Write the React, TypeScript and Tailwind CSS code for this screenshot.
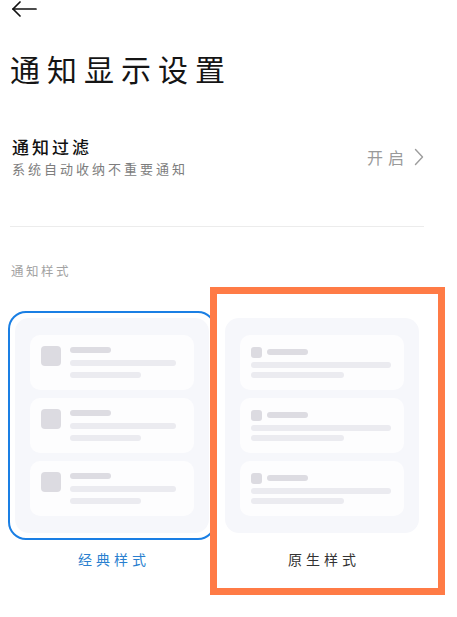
import React from "react";

function ClassicItem() {
  return (
    <div className="relative h-[55px] w-full rounded-[10px] bg-[#fdfdfe]">
      <div className="absolute left-[11px] top-[11px] h-[20px] w-[20px] rounded-[4px] bg-[#dcdbe1]" />
      <div className="absolute left-[40px] top-[12px] h-[6px] w-[41px] rounded-full bg-[#dddce2]" />
      <div className="absolute left-[40px] top-[25px] h-[6px] w-[106px] rounded-full bg-[#ebebf0]" />
      <div className="absolute left-[40px] top-[37px] h-[6px] w-[71px] rounded-full bg-[#ebebf0]" />
    </div>
  );
}

function NativeItem() {
  return (
    <div className="relative h-[55px] w-full rounded-[10px] bg-[#fdfdfe]">
      <div className="absolute left-[11px] top-[12px] h-[11px] w-[11px] rounded-[3px] bg-[#dcdbe1]" />
      <div className="absolute left-[27px] top-[14px] h-[6px] w-[41px] rounded-full bg-[#dddce2]" />
      <div className="absolute left-[11px] top-[27px] h-[6px] w-[140px] rounded-full bg-[#ebebf0]" />
      <div className="absolute left-[11px] top-[37px] h-[6px] w-[93px] rounded-full bg-[#ebebf0]" />
    </div>
  );
}

export default function App() {
  return (
    <div
      className="relative h-[617px] w-[457px] overflow-hidden bg-white text-[#111]"
      style={{ fontFamily: '"Noto Sans CJK SC", "Noto Sans", sans-serif' }}
    >
      {/* header */}
      <div className="h-[18px] pl-[11px] pt-[1px]">
        <svg width="26" height="16" viewBox="0 0 26 16" fill="none">
          <path d="M25 8 H2" stroke="#111" strokeWidth="1.7" strokeLinecap="round" />
          <path d="M9 1 L2 8 L9 15" stroke="#111" strokeWidth="1.7" strokeLinecap="round" strokeLinejoin="round" />
        </svg>
      </div>

      {/* title */}
      <div className="mt-[32px] pl-[10px] text-[30px] leading-[36px] tracking-[7px] text-[#151515]">
        通知显示设置
      </div>

      {/* filter row */}
      <div className="mt-[50px] flex items-center justify-between pl-[12px] pr-[33px]">
        <div className="flex flex-col">
          <div className="text-[17px] font-medium leading-[22px] tracking-[3px] text-[#111]">通知过滤</div>
          <div className="mt-[2px] text-[13px] leading-[18px] tracking-[3px] text-[#7d7d7d]">
            系统自动收纳不重要通知
          </div>
        </div>
        <div className="flex items-center gap-[5px] text-[#9a9a9a]">
          <span className="text-[16px] leading-[20px] tracking-[5px]">开启</span>
          <svg width="10" height="18" viewBox="0 0 10 18" fill="none">
            <path d="M1.5 1.5 L8.5 9 L1.5 16.5" stroke="#9d9d9d" strokeWidth="1.4" strokeLinecap="round" strokeLinejoin="round" />
          </svg>
        </div>
      </div>

      {/* divider */}
      <div className="ml-[10px] mr-[33px] mt-[48px] h-px bg-[#ececec]" />

      {/* section label */}
      <div className="mt-[36px] pl-[11px] text-[12.5px] leading-[16px] tracking-[2.5px] text-[#a3a3a3]">
        通知样式
      </div>

      {/* cards */}
      <div className="mt-[32px] flex gap-[2px] pl-[8px]">
        <div className="flex w-[208px] flex-col items-center">
          <div className="w-full rounded-[18px] border-[2.5px] border-[#1a7fe4] p-[5px]">
            <div className="flex flex-col gap-[8px] rounded-[14px] bg-[#f6f7fb] px-[15px] py-[17px]">
              <ClassicItem />
              <ClassicItem />
              <ClassicItem />
            </div>
          </div>
          <div className="mt-[9px] pl-[4px] text-[14px] leading-[20px] tracking-[4px] text-[#2a7fcf]">经典样式</div>
        </div>
        <div className="flex w-[208px] flex-col items-center">
          <div className="w-full rounded-[18px] border-[2.5px] border-transparent p-[5px]">
            <div className="flex flex-col gap-[8px] rounded-[14px] bg-[#f6f7fb] px-[15px] py-[17px]">
              <NativeItem />
              <NativeItem />
              <NativeItem />
            </div>
          </div>
          <div className="mt-[9px] pl-[4px] text-[14px] leading-[20px] tracking-[4px] text-[#333]">原生样式</div>
        </div>
      </div>

      {/* orange annotation overlay */}
      <div className="pointer-events-none absolute left-[210px] top-[287px] h-[308px] w-[235px] border-[7px] border-[#ff7b46]" />
    </div>
  );
}
